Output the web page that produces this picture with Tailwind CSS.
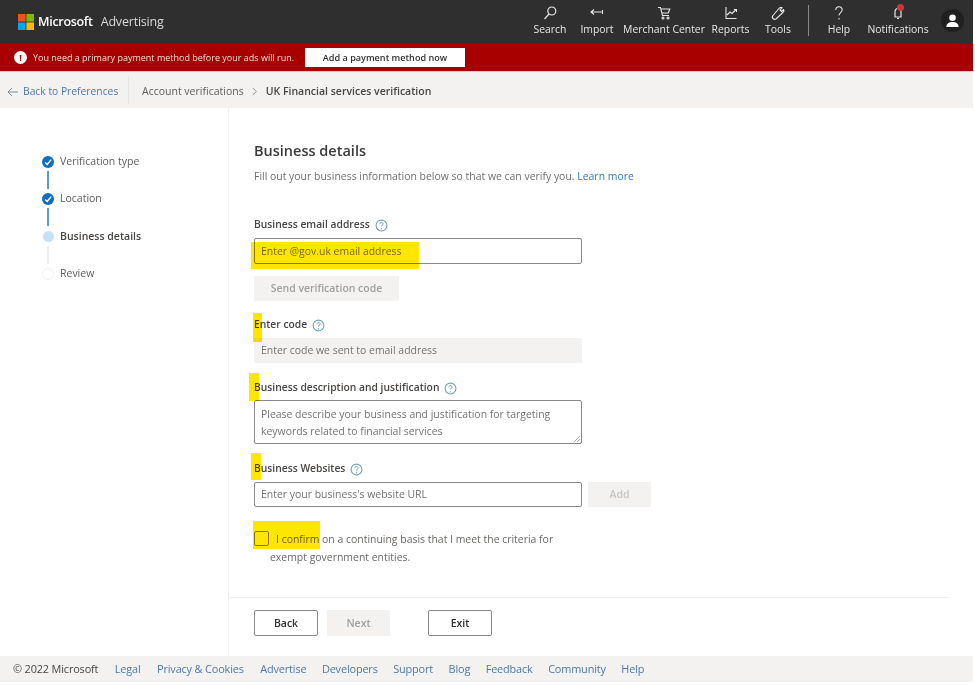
<!DOCTYPE html>
<html lang="en">
<head>
    <meta charset="UTF-8">
    <meta name="viewport" content="width=device-width, initial-scale=1.0">
    <title>Microsoft Advertising - UK Financial services verification</title>
    <script src="https://cdn.jsdelivr.net/npm/@tailwindcss/browser@4"></script>
</head>
<body class="bg-white h-[685px] w-[975px] pr-[2px] overflow-hidden flex flex-col font-['Open_Sans',sans-serif] text-[#323130]">
    <!-- top bar -->
    <header class="h-[44px] bg-[#2f2f2f] flex items-center text-[#e6e6e6] shrink-0">
        <div class="flex items-center pl-[18px] w-[528px]">
            <svg class="w-4 h-4" viewBox="0 0 16 16"><rect width="7.6" height="7.6" fill="#f25022"/><rect x="8.4" width="7.6" height="7.6" fill="#7fba00"/><rect y="8.4" width="7.6" height="7.6" fill="#00a4ef"/><rect x="8.4" y="8.4" width="7.6" height="7.6" fill="#ffb900"/></svg>
            <span class="ml-[4px] text-[12.5px] font-semibold text-white tracking-[-0.3px]">Microsoft</span>
            <span class="ml-[8px] text-[12.5px] text-[#d8d8d8] tracking-[-0.2px]">Advertising</span>
        </div>
        <nav class="flex items-start pt-[5px] h-full text-[10.4px] leading-[12px]">
            <div class="flex flex-col items-center w-[44px]">
                <svg class="w-[16px] h-[16px] mb-[2px]" viewBox="0 0 16 16" fill="none" stroke="#e6e6e6" stroke-width="1.2"><circle cx="9.8" cy="6" r="4"/><path d="M7 9l-4.500 5"/></svg>
                <span>Search</span>
            </div>
            <div class="flex flex-col items-center w-[50px]">
                <svg class="w-[16px] h-[16px] mb-[2px]" viewBox="0 0 16 16" fill="none" stroke="#e6e6e6" stroke-width="1.1"><path d="M2 7h11M5 4.500L2 7l3 2.500M13.500 5v4"/></svg>
                <span>Import</span>
            </div>
            <div class="flex flex-col items-center w-[84px]">
                <svg class="w-[16px] h-[16px] mb-[2px]" viewBox="0 0 16 16" fill="none" stroke="#e6e6e6" stroke-width="1.1"><path d="M2 2.500h2.500l2 8h6.500M4.800 4h9l-1.500 4H6"/><circle cx="7" cy="13" r="1"/><circle cx="12" cy="13" r="1"/></svg>
                <span class="whitespace-nowrap">Merchant Center</span>
            </div>
            <div class="flex flex-col items-center w-[49px]">
                <svg class="w-[16px] h-[16px] mb-[2px]" viewBox="0 0 16 16" fill="none" stroke="#e6e6e6" stroke-width="1.1"><path d="M3 2v11.500h10.500M4 10l3-3 2 1.500 4-4M11 4.500h2.500V7"/></svg>
                <span>Reports</span>
            </div>
            <div class="flex flex-col items-center w-[46px]">
                <svg class="w-[16px] h-[16px] mb-[2px]" viewBox="0 0 16 16" fill="none" stroke="#e6e6e6" stroke-width="1.1"><path d="M3 13.500c-1-1-1-2 0-3l5.500-6.500c1-1.200 2.500-2 3.500-1.200l-2 2.200 1.500 1.500 2-2c.8 1 0 2.500-1.200 3.500L6 14c-1 .6-2 .5-3-.5z"/></svg>
                <span>Tools</span>
            </div>
            <div class="w-px h-[31px] bg-[#8a8a8a] ml-[7px] mr-[7px]"></div>
            <div class="flex flex-col items-center w-[46px]">
                <svg class="w-[16px] h-[16px] mb-[2px]" viewBox="0 0 16 16" fill="none" stroke="#e6e6e6" stroke-width="1.1"><path d="M4.800 5c0-4.300 6.400-4.300 6.400-.2 0 2.700-3.200 2.900-3.200 5.700M8 13v1.500"/></svg>
                <span>Help</span>
            </div>
            <div class="flex flex-col items-center w-[72px] relative">
                <svg class="w-[16px] h-[16px] mb-[2px]" viewBox="0 0 16 16" fill="none" stroke="#e6e6e6" stroke-width="1.2"><path d="M5 12V7c0-2 1.300-3.500 3-3.500S11 5 11 7v5zM7 13.500h2"/></svg>
                <span class="absolute top-[-1px] left-[35px] w-[7px] h-[7px] rounded-full bg-[#d13438]"></span>
                <span>Notifications</span>
            </div>
            <div class="ml-[7px] mt-[4px] w-[23px] h-[23px] rounded-full bg-[#1f1f1f] flex items-center justify-center">
                <svg class="w-[15px] h-[15px]" viewBox="0 0 16 16" fill="#fff"><circle cx="8" cy="5" r="3.500"/><path d="M1.500 15c0-4 2.500-5.500 6.500-5.500s6.500 1.500 6.500 5.500z"/></svg>
            </div>
        </nav>
    </header>

    <!-- payment banner -->
    <div class="h-[28px] bg-[#a80000] border-b border-[#e8c4c4] flex items-center pl-[14px] text-white shrink-0">
        <span class="w-[13px] h-[13px] rounded-full bg-white text-[#a80000] text-[9px] leading-[13px] text-center font-bold">!</span>
        <span class="ml-[6px] pt-[1px] text-[9px] text-[#f6dcdc] w-[272px] whitespace-nowrap">You need a primary payment method before your ads will run.</span>
        <button class="h-[19px] w-[160px] bg-white text-[#323130] text-[9.100px] font-semibold">Add a payment method now</button>
    </div>

    <!-- breadcrumb -->
    <div class="h-[36px] bg-[#f3f2f1] flex items-center text-[10.500px] shrink-0">
        <div class="flex items-center pl-[7px] w-[129px] h-[28px] border-r border-[#e6e5e4] text-[#4f78a8]">
            <svg class="w-[12px] h-[12px] mr-[4px] mt-[3px]" viewBox="0 0 12 12" fill="none" stroke="#7d8a99" stroke-width="1"><path d="M11 6H1M5 2L1 6l4 4"/></svg>
            <span class="pt-[3px] text-[10.300px] whitespace-nowrap">Back to Preferences</span>
        </div>
        <span class="ml-[13px] pt-[3px] text-[#5f5e5d]">Account verifications</span>
        <svg class="w-[9px] h-[9px] mx-[6px] mt-[3px]" viewBox="0 0 10 10" fill="none" stroke="#8a8886" stroke-width="1"><path d="M3 1l4 4-4 4"/></svg>
        <span class="ml-[1px] pt-[3px] font-semibold text-[#484644]">UK Financial services verification</span>
    </div>

    <!-- main -->
    <main class="flex h-[548px] shrink-0">
        <aside class="w-[229px] border-r border-[#eeeeee] pt-[47px] pl-[42px] text-[10.500px] text-[#605e5c] shrink-0">
            <div class="flex items-start h-[37px]">
                <div class="flex flex-col items-center w-[12px]">
                    <span class="w-[12px] h-[12px] rounded-full bg-[#106ebe] flex items-center justify-center mt-[1px]"><svg class="w-[8px] h-[8px]" viewBox="0 0 10 10" fill="none" stroke="#fff" stroke-width="1.800"><path d="M1.500 5.500l2.500 2.500 5-6"/></svg></span>
                    <span class="w-[2px] h-[18px] mt-[3px] bg-[#5b9bd5]"></span>
                </div>
                <span class="ml-[6px] leading-[13px]">Verification type</span>
            </div>
            <div class="flex items-start h-[38px]">
                <div class="flex flex-col items-center w-[12px]">
                    <span class="w-[12px] h-[12px] rounded-full bg-[#106ebe] flex items-center justify-center mt-[1px]"><svg class="w-[8px] h-[8px]" viewBox="0 0 10 10" fill="none" stroke="#fff" stroke-width="1.800"><path d="M1.500 5.500l2.500 2.500 5-6"/></svg></span>
                    <span class="w-[2px] h-[18px] mt-[3px] bg-[#5b9bd5]"></span>
                </div>
                <span class="ml-[6px] leading-[13px]">Location</span>
            </div>
            <div class="flex items-start h-[37px]">
                <div class="flex flex-col items-center w-[12px]">
                    <span class="w-[11px] h-[11px] rounded-full bg-[#c7e0f4] mt-[1px]"></span>
                    <span class="w-[2px] h-[18px] mt-[4px] bg-[#eeeeee]"></span>
                </div>
                <span class="ml-[6px] leading-[13px] font-semibold text-[#484644]">Business details</span>
            </div>
            <div class="flex items-start">
                <div class="flex flex-col items-center w-[12px]">
                    <span class="w-[12px] h-[12px] rounded-full border border-[#eeeeee] mt-[1px]"></span>
                </div>
                <span class="ml-[6px] leading-[13px]">Review</span>
            </div>
        </aside>

        <section class="flex-1 flex flex-col relative">
            <div class="pl-[25px] pt-[33px] flex-1 text-[10.450px]">
                <h1 class="text-[14.500px] leading-[20px] font-semibold text-[#3b3a39]">Business details</h1>
                <p class="mt-[8px] leading-[14px] text-[#71706e]">Fill out your business information below so that we can verify you. <a class="text-[#2b7cc4]">Learn more</a></p>

                <div class="mt-[35px] flex items-center h-[14px] text-[10.300px] font-semibold text-[#484644]">Business email address
                    <svg class="ml-[5px] w-[13px] h-[13px]" viewBox="0 0 12 12" fill="none" stroke="#6d9fd0"><circle cx="6" cy="6" r="5"/><path d="M4.500 4.800c0-2 3-2 3-.2 0 1-1.500 1.200-1.500 2.400M6 8.500v1" stroke-width=".9"/></svg>
                </div>
                <div class="mt-[6px] w-[328px] h-[26px] border border-[#8a8886] rounded-[2px] pl-[6px] pt-[2px] flex items-center text-[#767472]">Enter @gov.uk email address</div>
                <button class="mt-[12px] w-[145px] h-[25px] bg-[#f3f2f1] text-[#a19f9d] font-semibold block">Send verification code</button>

                <div class="mt-[17px] flex items-center h-[14px] text-[10.300px] font-semibold text-[#484644]">Enter code
                    <svg class="ml-[5px] w-[13px] h-[13px]" viewBox="0 0 12 12" fill="none" stroke="#6d9fd0"><circle cx="6" cy="6" r="5"/><path d="M4.500 4.800c0-2 3-2 3-.2 0 1-1.500 1.200-1.500 2.400M6 8.500v1" stroke-width=".9"/></svg>
                </div>
                <div class="mt-[6px] w-[328px] h-[25px] bg-[#f3f2f1] pl-[7px] pt-[1px] flex items-center text-[#767472]">Enter code we sent to email address</div>

                <div class="mt-[18px] flex items-center h-[14px] text-[10.300px] font-semibold text-[#484644]">Business description and justification
                    <svg class="ml-[5px] w-[13px] h-[13px]" viewBox="0 0 12 12" fill="none" stroke="#6d9fd0"><circle cx="6" cy="6" r="5"/><path d="M4.500 4.800c0-2 3-2 3-.2 0 1-1.500 1.200-1.500 2.400M6 8.500v1" stroke-width=".9"/></svg>
                </div>
                <div class="mt-[5px] w-[328px] h-[44px] border border-[#8a8886] rounded-[2px] pl-[6px] pt-[5px] leading-[16.500px] text-[#767472] relative">Please describe your business and justification for targeting keywords related to financial services
                    <svg class="absolute right-[1px] bottom-[1px] w-[6px] h-[6px]" viewBox="0 0 6 6" stroke="#8a8886" stroke-width=".7"><path d="M0 6l6-6M3 6l3-3"/></svg>
                </div>

                <div class="mt-[18px] flex items-center h-[14px] text-[10.300px] font-semibold text-[#484644]">Business Websites
                    <svg class="ml-[5px] w-[13px] h-[13px]" viewBox="0 0 12 12" fill="none" stroke="#6d9fd0"><circle cx="6" cy="6" r="5"/><path d="M4.500 4.800c0-2 3-2 3-.2 0 1-1.500 1.200-1.500 2.400M6 8.500v1" stroke-width=".9"/></svg>
                </div>
                <div class="mt-[6px] flex items-center gap-[6px]">
                    <div class="w-[328px] h-[25px] border border-[#8a8886] rounded-[2px] pl-[6px] pt-[1px] flex items-center text-[#767472]">Enter your business's website URL</div>
                    <button class="w-[63px] h-[25px] bg-[#f3f2f1] text-[#c8c6c4] font-semibold">Add</button>
                </div>

                <div class="mt-[23px] flex items-start w-[310px]">
                    <span class="w-[15px] h-[15px] mt-[1px] border border-[#8a8886] rounded-[2px] shrink-0"></span>
                    <p class="ml-[1px] leading-[18px] text-[#6b6967] indent-[6px]">I confirm on a continuing basis that I meet the criteria for exempt government entities.</p>
                </div>
            </div>

            <!-- footer actions -->
            <div class="h-[59px] ml-[1px] mr-[25px] border-t border-[#eeeeee] pl-[24px] pt-[12px] flex items-start text-[10.500px] font-semibold">
                <button class="w-[64px] h-[26px] pt-[1px] border border-[#8a8886] rounded-[2px] text-[#323130]">Back</button>
                <button class="ml-[9px] w-[63px] h-[26px] pt-[1px] bg-[#f3f2f1] text-[#a19f9d]">Next</button>
                <button class="ml-[38px] w-[64px] h-[26px] pt-[1px] border border-[#8a8886] rounded-[2px] text-[#323130]">Exit</button>
            </div>

            <!-- yellow highlighter marks -->
            <span class="absolute left-[22px] top-[134px] w-[168px] h-[27px] bg-[#ffe600] mix-blend-multiply"></span>
            <span class="absolute left-[24px] top-[205px] w-[9px] h-[29px] bg-[#ffe600] mix-blend-multiply"></span>
            <span class="absolute left-[20px] top-[265px] w-[10px] h-[28px] bg-[#ffe600] mix-blend-multiply"></span>
            <span class="absolute left-[22px] top-[345px] w-[10px] h-[27px] bg-[#ffe600] mix-blend-multiply"></span>
            <span class="absolute left-[24px] top-[413px] w-[67px] h-[28px] bg-[#ffe600] mix-blend-multiply"></span>
        </section>
    </main>

    <!-- page footer -->
    <footer class="h-[26px] pt-[1px] bg-[#f3f2f1] flex items-center pl-[13px] text-[10.900px] text-[#4f78a8] gap-[15.500px] tracking-[-0.15px] shrink-0">
        <span class="text-[#484644]">© 2022 Microsoft</span>
        <a class="ml-[1px]">Legal</a><a class="ml-[1px]">Privacy &amp; Cookies</a><a class="ml-[1px]">Advertise</a><a>Developers</a><a>Support</a><a>Blog</a><a>Feedback</a><a>Community</a><a>Help</a>
    </footer>
</body>
</html>
